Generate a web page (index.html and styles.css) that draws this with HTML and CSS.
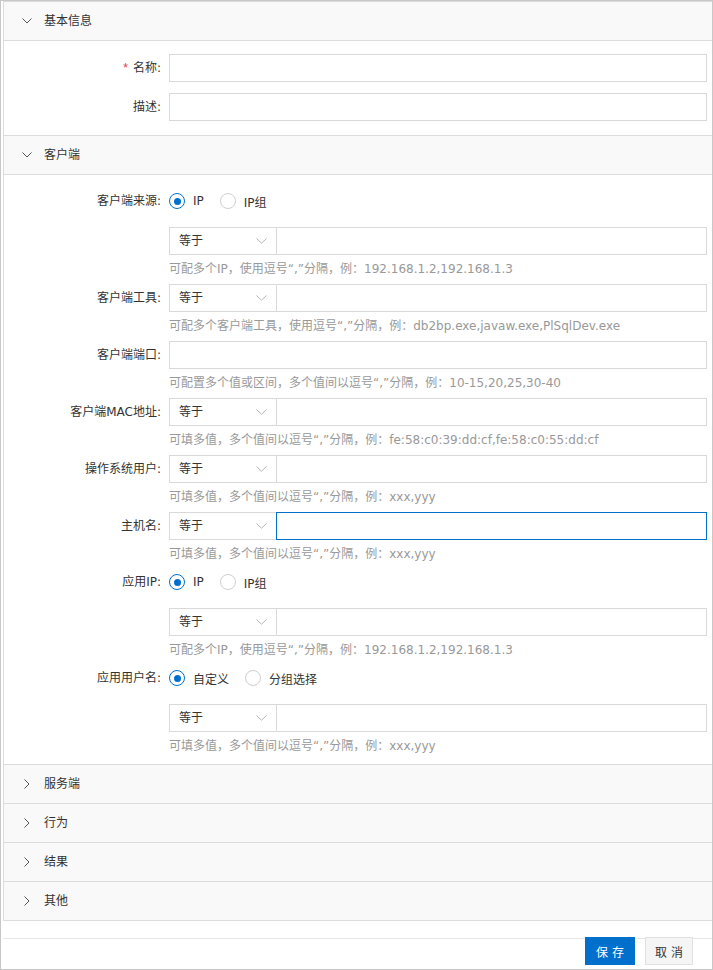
FILE: index.html
```html
<!DOCTYPE html>
<html lang="zh-CN">
<head>
<meta charset="utf-8">
<title>规则编辑</title>
<link rel="stylesheet" href="styles.css">
</head>
<body>
<div class="frame">
  <div class="panel">
    <section class="section">
      <div class="head">
        <span class="chev"><svg width="10" height="6" viewBox="0 0 10 6"><path d="M0.5 0.5 L5 5 L9.5 0.5" fill="none" stroke="#555" stroke-width="1"/></svg></span>
        <span class="head-title">基本信息</span>
      </div>
      <div class="body body-basic">
        <div class="row row-basic1">
          <label class="label"><span class="req">*</span>名称<span class="colon">:</span></label>
          <div class="ctrl"><div class="input"></div></div>
        </div>
        <div class="row">
          <label class="label">描述<span class="colon">:</span></label>
          <div class="ctrl"><div class="input"></div></div>
        </div>
      </div>
    </section>

    <section class="section">
      <div class="head">
        <span class="chev"><svg width="10" height="6" viewBox="0 0 10 6"><path d="M0.5 0.5 L5 5 L9.5 0.5" fill="none" stroke="#555" stroke-width="1"/></svg></span>
        <span class="head-title">客户端</span>
      </div>
      <div class="body body-client">
        <div class="row row-radio">
          <label class="label">客户端来源<span class="colon">:</span></label>
          <div class="ctrl radios">
            <span class="radio on"></span><span class="rtext">IP</span>
            <span class="radio"></span><span class="rtext">IP组</span>
          </div>
        </div>
        <div class="row row-field">
          <span class="label"></span>
          <div class="ctrl">
            <div class="combo"><div class="select">等于<svg class="arrow" width="11" height="6" viewBox="0 0 11 6"><path d="M0.5 0.5 L5.5 5.2 L10.5 0.5" fill="none" stroke="#b5b5b5" stroke-width="1"/></svg></div><div class="input grow"></div></div>
            <div class="hint">可配多个IP，使用逗号“,”分隔，例：192.168.1.2,192.168.1.3</div>
          </div>
        </div>
        <div class="row row-field">
          <label class="label">客户端工具<span class="colon">:</span></label>
          <div class="ctrl">
            <div class="combo"><div class="select">等于<svg class="arrow" width="11" height="6" viewBox="0 0 11 6"><path d="M0.5 0.5 L5.5 5.2 L10.5 0.5" fill="none" stroke="#b5b5b5" stroke-width="1"/></svg></div><div class="input grow"></div></div>
            <div class="hint">可配多个客户端工具，使用逗号“,”分隔，例：db2bp.exe,javaw.exe,PlSqlDev.exe</div>
          </div>
        </div>
        <div class="row row-field">
          <label class="label">客户端端口<span class="colon">:</span></label>
          <div class="ctrl">
            <div class="input"></div>
            <div class="hint">可配置多个值或区间，多个值间以逗号“,”分隔，例：10-15,20,25,30-40</div>
          </div>
        </div>
        <div class="row row-field">
          <label class="label">客户端MAC地址<span class="colon">:</span></label>
          <div class="ctrl">
            <div class="combo"><div class="select">等于<svg class="arrow" width="11" height="6" viewBox="0 0 11 6"><path d="M0.5 0.5 L5.5 5.2 L10.5 0.5" fill="none" stroke="#b5b5b5" stroke-width="1"/></svg></div><div class="input grow"></div></div>
            <div class="hint">可填多值，多个值间以逗号“,”分隔，例：fe:58:c0:39:dd:cf,fe:58:c0:55:dd:cf</div>
          </div>
        </div>
        <div class="row row-field">
          <label class="label">操作系统用户<span class="colon">:</span></label>
          <div class="ctrl">
            <div class="combo"><div class="select">等于<svg class="arrow" width="11" height="6" viewBox="0 0 11 6"><path d="M0.5 0.5 L5.5 5.2 L10.5 0.5" fill="none" stroke="#b5b5b5" stroke-width="1"/></svg></div><div class="input grow"></div></div>
            <div class="hint">可填多值，多个值间以逗号“,”分隔，例：xxx,yyy</div>
          </div>
        </div>
        <div class="row row-field before-radio">
          <label class="label">主机名<span class="colon">:</span></label>
          <div class="ctrl">
            <div class="combo"><div class="select">等于<svg class="arrow" width="11" height="6" viewBox="0 0 11 6"><path d="M0.5 0.5 L5.5 5.2 L10.5 0.5" fill="none" stroke="#b5b5b5" stroke-width="1"/></svg></div><div class="input grow focus"></div></div>
            <div class="hint">可填多值，多个值间以逗号“,”分隔，例：xxx,yyy</div>
          </div>
        </div>
        <div class="row row-radio">
          <label class="label">应用IP<span class="colon">:</span></label>
          <div class="ctrl radios">
            <span class="radio on"></span><span class="rtext">IP</span>
            <span class="radio"></span><span class="rtext">IP组</span>
          </div>
        </div>
        <div class="row row-field before-radio">
          <span class="label"></span>
          <div class="ctrl">
            <div class="combo"><div class="select">等于<svg class="arrow" width="11" height="6" viewBox="0 0 11 6"><path d="M0.5 0.5 L5.5 5.2 L10.5 0.5" fill="none" stroke="#b5b5b5" stroke-width="1"/></svg></div><div class="input grow"></div></div>
            <div class="hint">可配多个IP，使用逗号“,”分隔，例：192.168.1.2,192.168.1.3</div>
          </div>
        </div>
        <div class="row row-radio">
          <label class="label">应用用户名<span class="colon">:</span></label>
          <div class="ctrl radios">
            <span class="radio on"></span><span class="rtext">自定义</span>
            <span class="radio"></span><span class="rtext">分组选择</span>
          </div>
        </div>
        <div class="row row-field last">
          <span class="label"></span>
          <div class="ctrl">
            <div class="combo"><div class="select">等于<svg class="arrow" width="11" height="6" viewBox="0 0 11 6"><path d="M0.5 0.5 L5.5 5.2 L10.5 0.5" fill="none" stroke="#b5b5b5" stroke-width="1"/></svg></div><div class="input grow"></div></div>
            <div class="hint">可填多值，多个值间以逗号“,”分隔，例：xxx,yyy</div>
          </div>
        </div>
      </div>
    </section>

    <section class="section">
      <div class="head">
        <span class="chev"><svg width="6" height="10" viewBox="0 0 6 10"><path d="M0.5 0.5 L5 5 L0.5 9.5" fill="none" stroke="#555" stroke-width="1"/></svg></span>
        <span class="head-title">服务端</span>
      </div>
    </section>
    <section class="section">
      <div class="head">
        <span class="chev"><svg width="6" height="10" viewBox="0 0 6 10"><path d="M0.5 0.5 L5 5 L0.5 9.5" fill="none" stroke="#555" stroke-width="1"/></svg></span>
        <span class="head-title">行为</span>
      </div>
    </section>
    <section class="section">
      <div class="head">
        <span class="chev"><svg width="6" height="10" viewBox="0 0 6 10"><path d="M0.5 0.5 L5 5 L0.5 9.5" fill="none" stroke="#555" stroke-width="1"/></svg></span>
        <span class="head-title">结果</span>
      </div>
    </section>
    <section class="section">
      <div class="head">
        <span class="chev"><svg width="6" height="10" viewBox="0 0 6 10"><path d="M0.5 0.5 L5 5 L0.5 9.5" fill="none" stroke="#555" stroke-width="1"/></svg></span>
        <span class="head-title">其他</span>
      </div>
    </section>
  </div>

  <div class="footer">
    <button class="btn btn-primary" type="button">保存</button>
    <button class="btn btn-default" type="button">取消</button>
  </div>
</div>
</body>
</html>
```

FILE: styles.css
```css
* { box-sizing: border-box; }

html, body {
  margin: 0;
  padding: 0;
  background: #fff;
}

body {
  font-family: "DejaVu Sans", "Noto Sans CJK SC", sans-serif;
  font-size: 12px;
  color: #333;
}

.frame {
  width: 713px;
  height: 970px;
  border: 1px solid #c8c8c8;
  padding-left: 2px;
  display: flex;
  flex-direction: column;
}

.panel {
  border-top: 1px solid #dcdcdc;
  border-left: 1px solid #dcdcdc;
}

.head {
  height: 39px;
  border-bottom: 1px solid #dcdcdc;
  background: #f9f9f9;
  display: flex;
  align-items: center;
  padding-left: 18px;
}

.chev {
  width: 10px;
  height: 10px;
  display: flex;
  align-items: center;
  justify-content: center;
  margin-right: 12px;
}

.chev svg { display: block; }

.head-title {
  line-height: 20px;
  color: #333;
}

.body {
  border-bottom: 1px solid #dcdcdc;
  padding-right: 5px;
}

.body-basic {
  padding-top: 13px;
  padding-bottom: 14px;
}

.body-client {
  padding-top: 12px;
  padding-bottom: 8px;
}

.row {
  display: grid;
  grid-template-columns: 165px 1fr;
}

.row-basic1 { margin-bottom: 11px; }

.label {
  height: 28px;
  line-height: 28px;
  text-align: right;
  white-space: nowrap;
  color: #333;
}

.colon {
  display: inline-block;
  margin-left: 0;
  margin-right: 8px;
}

.req {
  color: #e4393c;
  margin-right: 5px;
  font-family: "Liberation Sans", sans-serif;
}

.input {
  height: 28px;
  border: 1px solid #d9d9d9;
  background: #fff;
}

.input.focus {
  border-color: #0070cc;
  position: relative;
}

.combo {
  display: flex;
}

.select {
  width: 108px;
  height: 28px;
  border: 1px solid #d9d9d9;
  padding-left: 9px;
  line-height: 26px;
  display: flex;
  align-items: center;
  justify-content: space-between;
  padding-right: 9px;
  color: #333;
}

.arrow { display: block; }

.grow {
  flex: 1;
  margin-left: -1px;
}

.hint {
  margin-top: 4px;
  line-height: 20px;
  color: #999;
  white-space: nowrap;
}

.row-field { margin-bottom: 5px; }
.row-field.before-radio { margin-bottom: 4px; }
.row-field.last { margin-bottom: 0; }

.row-radio { margin-bottom: 12px; }

.radios {
  display: flex;
  align-items: center;
  height: 28px;
}

.radio {
  width: 16px;
  height: 16px;
  border-radius: 50%;
  border: 1px solid #cfcfcf;
  background: #fff;
  display: flex;
  align-items: center;
  justify-content: center;
  margin-right: 8px;
}

.radio.on {
  border-color: #0070cc;
}

.radio.on::after {
  content: "";
  width: 7px;
  height: 7px;
  border-radius: 50%;
  background: #0070cc;
}

.rtext {
  margin-right: 16px;
  color: #333;
}

.footer {
  margin-top: 17px;
  border-top: 1px solid #e6e6e6;
  display: flex;
  justify-content: flex-end;
  padding-right: 19px;
  gap: 10px;
}

.btn {
  margin-top: -2px;
  height: 28px;
  font-family: "Noto Sans CJK SC", sans-serif;
  font-size: 12px;
  letter-spacing: 4px;
  padding: 0 0 0 4px;
  cursor: pointer;
}

.btn-primary {
  width: 50px;
  background: #0070cc;
  border: 1px solid #0070cc;
  color: #fff;
}

.btn-default {
  width: 48px;
  background: #f5f5f5;
  border: 1px solid #e0e0e0;
  color: #333;
}
```
